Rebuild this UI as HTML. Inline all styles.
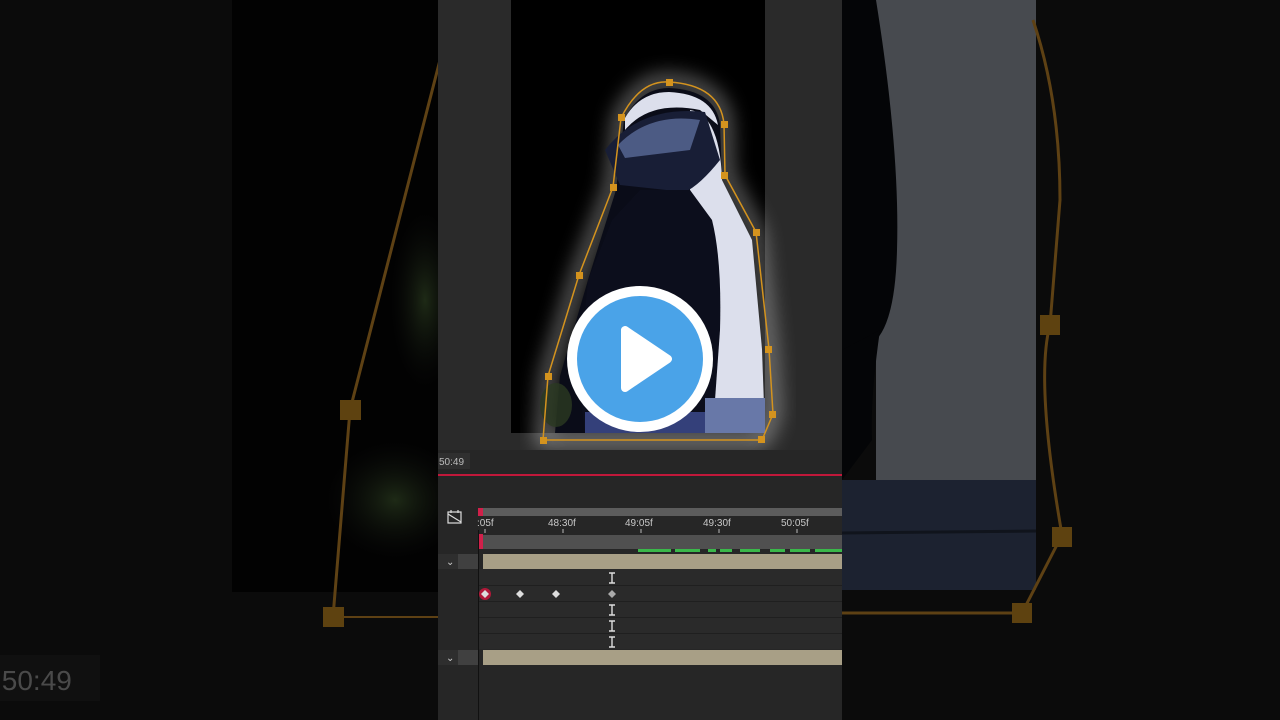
<!DOCTYPE html>
<html><head><meta charset="utf-8"><style>
html,body{margin:0;padding:0;width:1280px;height:720px;overflow:hidden;background:#0b0b0b;font-family:"Liberation Sans",sans-serif}
svg{display:block}
</style></head><body>
<svg width="1280" height="720" viewBox="0 0 1280 720" xmlns="http://www.w3.org/2000/svg">
<defs>
<filter id="b12"><feGaussianBlur stdDeviation="10"/></filter>
<radialGradient id="green" cx="0.5" cy="0.5" r="0.5"><stop offset="0" stop-color="#1e2a16"/><stop offset="1" stop-color="#0b0b0b" stop-opacity="0"/></radialGradient>
</defs>
<!-- left blurred bg -->
<rect x="0" y="0" width="440" height="720" fill="#0b0b0b"/>
<rect x="232" y="0" width="208" height="592" fill="#020202"/>
<ellipse cx="425" cy="300" rx="35" ry="90" fill="url(#green)"/>
<ellipse cx="395" cy="500" rx="70" ry="60" fill="url(#green)"/>
<path d="M440 60 L350 410 L333 617" stroke="#5e4114" stroke-width="3" fill="none"/>
<line x1="333" y1="617" x2="440" y2="617" stroke="#5e4114" stroke-width="2"/>
<rect x="340" y="400" width="21" height="20" fill="#5e4210"/>
<rect x="323" y="607" width="21" height="20" fill="#5e4210"/>
<rect x="0" y="655" width="100" height="46" fill="#101010"/>
<text x="-6" y="690" fill="#4a4a4a" font-size="28">:50:49</text>
<!-- right blurred bg -->
<rect x="842" y="0" width="438" height="720" fill="#0b0b0b"/>
<rect x="876" y="0" width="160" height="480" fill="#474a4f"/>
<path d="M842 0 L876 0 Q900 150 897 250 Q895 330 870 345 L842 360 Z" fill="#040507"/>
<path d="M842 350 L880 330 Q870 400 872 440 L842 480Z" fill="#040507"/>
<rect x="842" y="480" width="194" height="110" fill="#1c2230"/>
<line x1="842" y1="533" x2="1036" y2="531" stroke="#10141c" stroke-width="3"/>
<path d="M1033 20 Q1060 100 1060 200 L1050 325 Q1035 380 1062 535 L1022 613 L842 613" stroke="#5e4114" stroke-width="3" fill="none"/>
<rect x="1040" y="315" width="20" height="20" fill="#5e4210"/>
<rect x="1052" y="527" width="20" height="20" fill="#5e4210"/>
<rect x="1012" y="603" width="20" height="20" fill="#5e4210"/>
<!-- center panel -->
<rect x="438" y="0" width="404" height="720" fill="#2a2a2a"/>
<rect x="511" y="0" width="254" height="433" fill="#000"/>
<path d="M543 440 L548 376 L579 275 L613 187 L621 118 Q640 80 669 82 Q720 85 724 124 L725 175 L756 232 L769 349 L773 414 L762 440 Z" fill="none" stroke="#fff" stroke-width="12" opacity="0.5" filter="url(#b12)"/>
<path d="M555 433 L560 376 L588 280 L616 190 L624 120 Q640 88 669 88 Q715 90 720 124 L722 180 L750 240 L762 349 L765 433 Z" fill="#0a0c18"/>
<path d="M690 110 Q720 115 722 180 L752 240 L762 349 L765 433 L705 433 L712 300 Q705 220 690 190 Z" fill="#dcdfec"/>
<path d="M625 118 Q640 92 669 92 Q712 94 718 125 L700 110 Q650 100 625 130Z" fill="#dcdfec"/>
<path d="M605 150 Q640 105 705 112 L720 160 Q700 185 685 192 L620 185 Z" fill="#181e36"/>
<path d="M618 145 Q650 112 700 120 L690 150 L625 158 Z" fill="#5a6a98" opacity="0.8"/>
<path d="M640 190 L690 190 L712 220 Q722 260 720 330 L715 400 L710 433 L585 433 L578 380 L588 280 L612 220 Z" fill="#0c0e1c"/>
<rect x="705" y="398" width="60" height="35" fill="#6878a8"/>
<rect x="585" y="412" width="120" height="21" fill="#34407a"/>
<ellipse cx="556" cy="405" rx="16" ry="22" fill="#2a3a22" opacity="0.8"/>
<path d="M543 440 L548 376 L579 275 L613 187 L621 118 Q640 80 669 82 Q720 85 724 124 L725 175 L756 232 L769 349 L773 414 L762 440 Z" fill="none" stroke="#d4931e" stroke-width="1.5"/>
<g fill="#d4931e">
<rect x="666" y="79" width="7" height="7"/><rect x="618" y="114" width="7" height="7"/><rect x="721" y="121" width="7" height="7"/>
<rect x="721" y="172" width="7" height="7"/><rect x="610" y="184" width="7" height="7"/><rect x="753" y="229" width="7" height="7"/>
<rect x="576" y="272" width="7" height="7"/><rect x="765" y="346" width="7" height="7"/><rect x="545" y="373" width="7" height="7"/>
<rect x="769" y="411" width="7" height="7"/><rect x="540" y="437" width="7" height="7"/><rect x="758" y="436" width="7" height="7"/>
</g>
<circle cx="640" cy="359" r="73" fill="#fff"/>
<circle cx="640" cy="359" r="63" fill="#4aa3e8"/>
<polygon points="625,330 625,388 668,359" fill="#fff" stroke="#fff" stroke-width="8" stroke-linejoin="round"/>
<!-- timeline -->
<rect x="438" y="450" width="404" height="270" fill="#262626"/>
<rect x="438" y="453" width="32" height="16" fill="#2f2f2f"/>
<text x="439" y="465" fill="#bbb" font-size="10">50:49</text>
<line x1="438" y1="475" x2="842" y2="475" stroke="#c0183a" stroke-width="2"/>
<rect x="478" y="508" width="364" height="8" fill="#5c5c5c"/>
<rect x="478" y="508" width="5" height="8" fill="#d0204a"/>
<g stroke="#ddd" stroke-width="1.2" fill="none"><rect x="448" y="512" width="13" height="11"/><line x1="448" y1="514" x2="461" y2="522"/><line x1="451" y1="510" x2="451" y2="513"/><line x1="458" y1="510" x2="458" y2="513"/></g>
<g fill="#c8c8c8" font-size="10"><text x="477" y="526">:05f</text><text x="548" y="526">48:30f</text><text x="625" y="526">49:05f</text><text x="703" y="526">49:30f</text><text x="781" y="526">50:05f</text></g>
<g stroke="#bbb"><line x1="485" y1="529" x2="485" y2="533"/><line x1="563" y1="529" x2="563" y2="533"/><line x1="641" y1="529" x2="641" y2="533"/><line x1="719" y1="529" x2="719" y2="533"/><line x1="797" y1="529" x2="797" y2="533"/></g>
<rect x="478" y="535" width="364" height="14" fill="#505050"/>
<rect x="478" y="534" width="5" height="15" fill="#d0204a"/>
<g fill="#3ab84a"><rect x="638" y="549" width="33" height="3"/><rect x="675" y="549" width="25" height="3"/><rect x="708" y="549" width="8" height="3"/><rect x="720" y="549" width="12" height="3"/><rect x="740" y="549" width="20" height="3"/><rect x="770" y="549" width="15" height="3"/><rect x="790" y="549" width="20" height="3"/><rect x="815" y="549" width="27" height="3"/></g>
<rect x="438" y="554" width="40" height="15" fill="#2e2e2e"/>
<rect x="458" y="554" width="20" height="15" fill="#404040"/>
<rect x="483" y="554" width="359" height="15" fill="#a89f86"/>
<text x="446" y="565" fill="#ccc" font-size="10">⌄</text>
<rect x="478" y="569" width="364" height="80" fill="#2a2a2a"/>
<g stroke="#1f1f1f" stroke-width="1"><line x1="478" y1="585.5" x2="842" y2="585.5"/><line x1="478" y1="601.5" x2="842" y2="601.5"/><line x1="478" y1="617.5" x2="842" y2="617.5"/><line x1="478" y1="633.5" x2="842" y2="633.5"/></g>
<g stroke="#ddd" stroke-width="1.4" fill="none"><path d="M612 573v10M609 573h6M609 583h6"/><path d="M612 605v10M609 605h6M609 615h6"/><path d="M612 621v10M609 621h6M609 631h6"/><path d="M612 637v10M609 637h6M609 647h6"/></g>
<circle cx="485" cy="594" r="6" fill="#b01838"/>
<g fill="#ddd"><path d="M485 590 L489 594 L485 598 L481 594Z"/><path d="M520 590 L524 594 L520 598 L516 594Z"/><path d="M556 590 L560 594 L556 598 L552 594Z"/><path d="M612 590 L616 594 L612 598 L608 594Z" fill="#aaa"/></g>
<rect x="438" y="650" width="40" height="15" fill="#2e2e2e"/>
<rect x="458" y="650" width="20" height="15" fill="#404040"/>
<rect x="483" y="650" width="359" height="15" fill="#a89f86"/>
<text x="446" y="661" fill="#ccc" font-size="10">⌄</text>
<line x1="478.5" y1="530" x2="478.5" y2="720" stroke="#111" stroke-width="1"/>
</svg>
</body></html>
